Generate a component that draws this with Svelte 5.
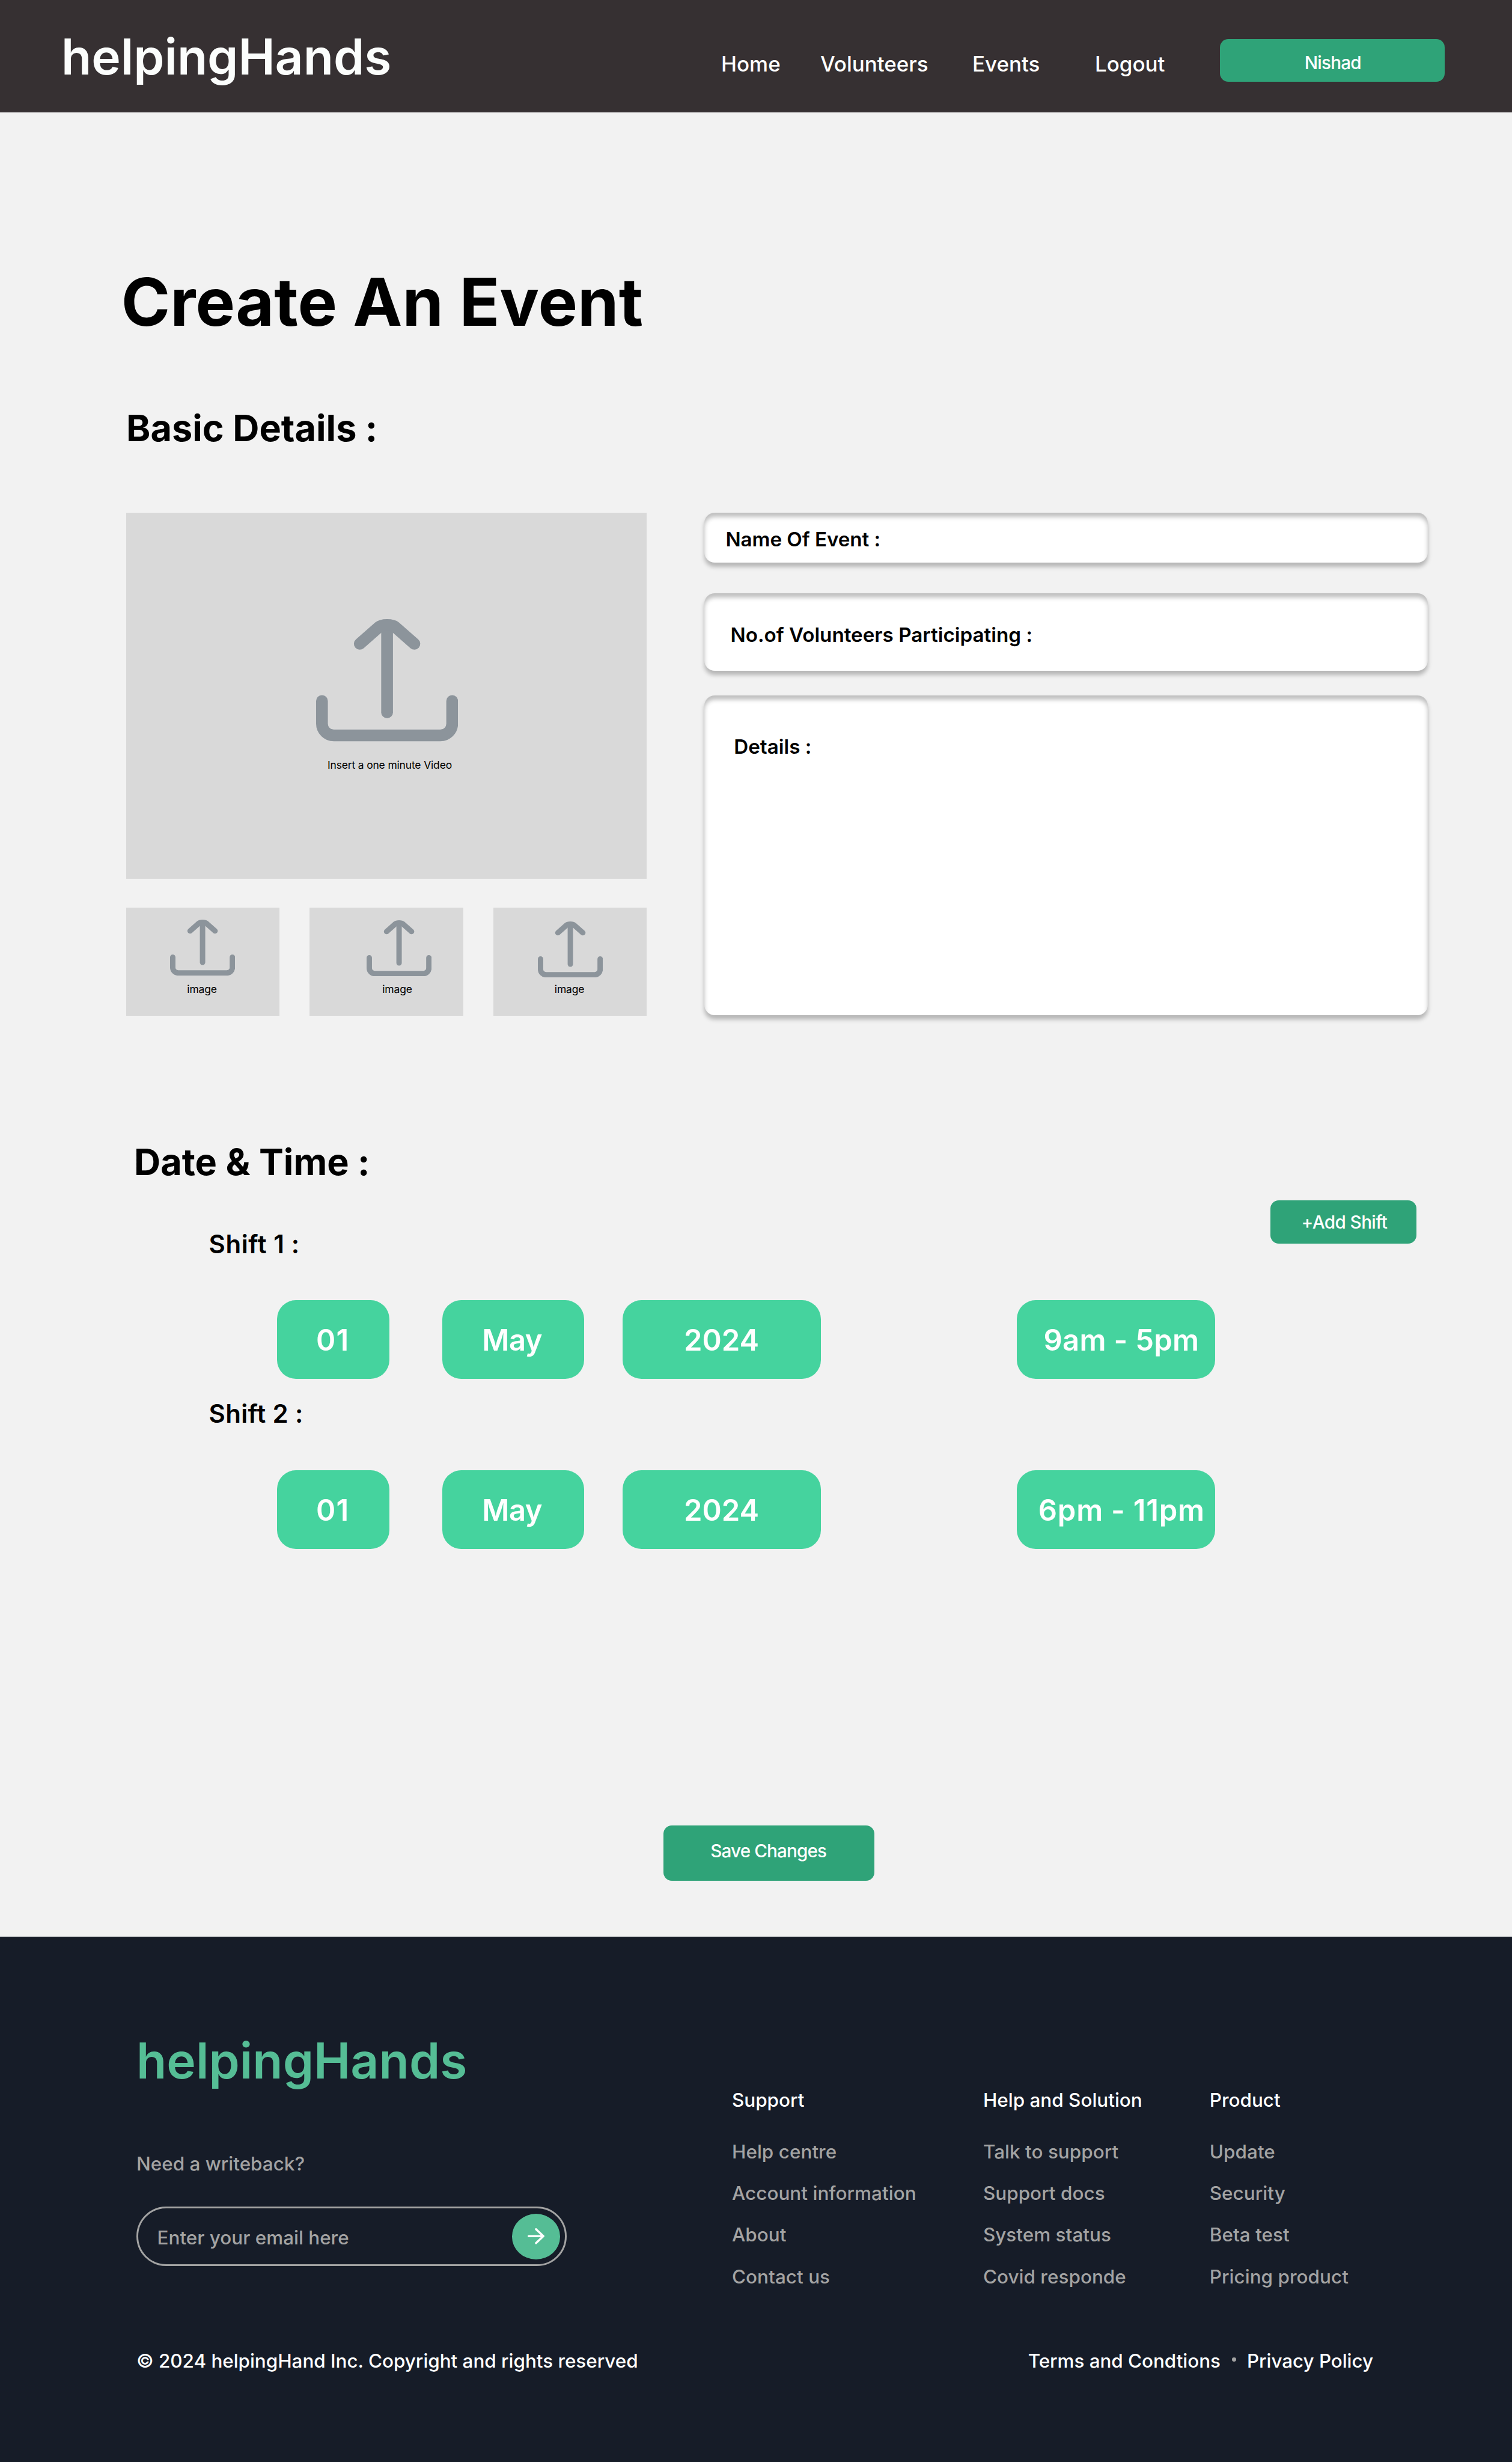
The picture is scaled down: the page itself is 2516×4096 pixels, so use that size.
<script>
  const navLinks = ['Home', 'Volunteers', 'Events', 'Logout'];

  const fields = [
    { id: 'field-name', label: 'Name Of Event :' },
    { id: 'field-count', label: 'No.of Volunteers Participating :' },
    { id: 'field-details', label: 'Details :' }
  ];

  const shifts = [
    { label: 'Shift 1 :', day: '01', month: 'May', year: '2024', time: '9am - 5pm' },
    { label: 'Shift 2 :', day: '01', month: 'May', year: '2024', time: '6pm - 11pm' }
  ];

  const columns = [
    { title: 'Support', links: ['Help centre', 'Account information', 'About', 'Contact us'] },
    { title: 'Help and Solution', links: ['Talk to support', 'Support docs', 'System status', 'Covid responde'] },
    { title: 'Product', links: ['Update', 'Security', 'Beta test', 'Pricing product'] }
  ];
</script>

{#snippet uploadIcon()}
  <svg class="upload" viewBox="0 0 135.2 116.4" aria-hidden="true">
    <path d="M5.6 78V99.6A11.3 11.2 0 0 0 16.9 110.8H118.3A11.3 11.2 0 0 0 129.6 99.6V78" />
    <path d="M67.6 8V88.8" />
    <path d="M41.6 23.5L60 7.4C62.8 5 72.4 5 75.2 7.4L93.6 23.5" />
  </svg>
{/snippet}

<div class="page">
  <header>
    <div class="brand">helpingHands</div>
    <nav>
      {#each navLinks as link}<a href="#top">{link}</a>{/each}
    </nav>
    <button class="btn user">Nishad</button>
  </header>

  <main>
    <h1>Create An Event</h1>
    <h2 class="basic">Basic Details :</h2>

    <section class="details">
      <div class="media">
        <div class="video">
          {@render uploadIcon()}
          <p>Insert a one minute Video</p>
        </div>
        <div class="thumbs">
          {#each [1, 2, 3] as n (n)}
            <div class="thumb">
              {@render uploadIcon()}
              <p>image</p>
            </div>
          {/each}
        </div>
      </div>
      <div class="fields">
        {#each fields as field (field.id)}
          <div class="field {field.id}">{field.label}</div>
        {/each}
      </div>
    </section>

    <h2 class="date">Date &amp; Time :</h2>

    <section class="schedule">
      <div class="shifts">
        {#each shifts as shift}
          <div class="shift">
            <h3>{shift.label}</h3>
            <div class="chips">
              <span class="chip day">{shift.day}</span>
              <span class="chip month">{shift.month}</span>
              <span class="chip year">{shift.year}</span>
              <span class="chip time">{shift.time}</span>
            </div>
          </div>
        {/each}
      </div>
      <button class="btn add">+Add Shift</button>
    </section>

    <button class="btn save">Save Changes</button>
  </main>

  <footer>
    <div class="top">
      <div class="contact">
        <div class="brand green">helpingHands</div>
        <p class="writeback">Need a writeback?</p>
        <div class="email">
          <span>Enter your email here</span>
          <button class="send" aria-label="Send">
            <svg viewBox="0 0 16 15.2" aria-hidden="true">
              <path d="M1 7.6H15M8 1L15 7.6L8 14.2" />
            </svg>
          </button>
        </div>
      </div>
      <div class="columns">
        {#each columns as column}
          <div class="column">
            <h4>{column.title}</h4>
            <ul>
              {#each column.links as link}<li>{link}</li>{/each}
            </ul>
          </div>
        {/each}
      </div>
    </div>
    <div class="bottom">
      <p>© 2024 helpingHand Inc. Copyright and rights reserved</p>
      <div class="legal">
        <span>Terms and Condtions</span>
        <i class="dot"></i>
        <span>Privacy Policy</span>
      </div>
    </div>
  </footer>
</div>

<style>
  /* 1rem is ten units of a 1440-unit-wide layout */
  :global(html) {
    font-size: calc(100vw / 144);
  }
  :global(body) {
    margin: 0;
    background: #f2f2f2;
  }
  * {
    box-sizing: border-box;
  }
  h1, h2, h3, h4, p, ul {
    margin: 0;
    padding: 0;
  }
  ul {
    list-style: none;
  }

  .page {
    width: 144rem;
    height: 234.45rem;
    overflow: hidden;
    background: #f2f2f2;
    color: #000;
    font-family: 'Inter', sans-serif;
    line-height: 1.2;
    white-space: nowrap;
  }

  .btn {
    display: block;
    border: 0;
    border-radius: 0.8rem;
    background: #2fa378;
    color: #fff;
    font: 500 1.7rem/1.2 'Inter', sans-serif;
    text-align: left;
    white-space: nowrap;
  }

  /* Header */
  header {
    display: flex;
    align-items: flex-start;
    height: 10.7rem;
    padding-left: 5.84rem;
    background: #363032;
    color: #fbfdfc;
  }
  .brand {
    font-size: 4.7rem;
    font-weight: 600;
    letter-spacing: -0.002rem;
  }
  header .brand {
    width: 62.84rem;
    margin-top: 2.58rem;
  }
  nav {
    display: grid;
    grid-template-columns: 9.44rem 14.48rem 11.68rem 11.9rem;
    margin-top: 4.94rem;
    font-size: 2rem;
    font-weight: 500;
  }
  nav a {
    color: #fff;
    text-decoration: none;
  }
  .user {
    width: 21.4rem;
    height: 4.1rem;
    margin-top: 3.7rem;
    padding: 0.54rem 0 0 8.06rem;
    letter-spacing: -0.047rem;
  }

  /* Main */
  main {
    height: 173.7rem;
    padding-top: 14.27rem;
  }
  h1 {
    margin-left: 11.54rem;
    font-size: 6.3rem;
    font-weight: 700;
    letter-spacing: 0.006rem;
  }
  h2 {
    font-size: 3.5rem;
    font-weight: 700;
  }
  .basic {
    margin: 6.15rem 0 5.92rem 12.02rem;
  }
  .date {
    margin: 11.88rem 0 1.52rem 12.77rem;
  }

  .details {
    display: flex;
    gap: 5.5rem;
    margin-left: 12rem;
  }
  .media {
    width: 49.6rem;
  }
  .upload {
    display: block;
    fill: none;
    stroke: #8c949b;
    stroke-width: 11.2;
    stroke-linecap: round;
  }
  .video,
  .thumb {
    background: #d9d9d9;
    font-size: 1rem;
    letter-spacing: -0.009rem;
  }
  .video {
    height: 34.9rem;
    padding: 10.17rem 0 0 18.09rem;
  }
  .video .upload {
    width: 13.52rem;
    height: 11.64rem;
  }
  .video p {
    margin: 1.69rem 0 0 1.1rem;
  }
  .thumbs {
    display: flex;
    justify-content: space-between;
    margin-top: 2.7rem;
  }
  .thumb {
    width: 14.6rem;
    height: 10.3rem;
    padding: 1.15rem 0 0 4.21rem;
  }
  .thumb .upload {
    width: 6.19rem;
    height: 5.33rem;
  }
  .thumb p {
    margin: 0.76rem 0 0 1.61rem;
  }
  .thumb:nth-child(2) {
    padding: 1.25rem 0 0 5.4rem;
  }
  .thumb:nth-child(2) p {
    margin: 0.66rem 0 0 1.52rem;
  }
  .thumb:nth-child(3) {
    padding-top: 1.34rem;
  }
  .thumb:nth-child(3) p {
    margin-top: 0.57rem;
  }

  .fields {
    width: 68.9rem;
  }
  .field {
    border-radius: 1rem;
    background: #fff;
    box-shadow:
      0 0.4rem 0.4rem rgba(0, 0, 0, 0.25),
      inset 0 0.4rem 0.4rem rgba(0, 0, 0, 0.25);
    font-size: 1.9rem;
    font-weight: 600;
  }
  .field-name {
    height: 4.8rem;
    padding: 1.44rem 0 0 2.01rem;
    letter-spacing: -0.003rem;
  }
  .field-count {
    height: 7.4rem;
    margin-top: 2.9rem;
    padding: 2.85rem 0 0 2.47rem;
  }
  .field-details {
    height: 30.5rem;
    margin-top: 2.3rem;
    padding: 3.83rem 0 0 2.8rem;
  }

  /* Schedule */
  .schedule {
    display: flex;
    align-items: flex-start;
    height: 33.2rem;
    margin-left: 19.89rem;
  }
  .shifts {
    width: 101.12rem;
    padding-top: 2.72rem;
  }
  .shift + .shift {
    margin-top: 1.88rem;
  }
  h3 {
    font-size: 2.4rem;
    font-weight: 600;
    letter-spacing: 0.02rem;
  }
  .shift:first-child h3 {
    letter-spacing: 0.036rem;
  }
  .chips {
    display: grid;
    grid-template-columns: 15.71rem 17.19rem 37.51rem 18.9rem;
    margin: 3.92rem 0 0 6.52rem;
  }
  .chip {
    height: 7.5rem;
    padding-top: 2.18rem;
    border-radius: 1.8rem;
    background: #45d39e;
    color: #fff;
    font-size: 2.8rem;
    font-weight: 600;
  }
  .day {
    width: 10.7rem;
    padding-left: 3.69rem;
    letter-spacing: 0.08rem;
  }
  .month {
    width: 13.5rem;
    padding-left: 3.8rem;
    letter-spacing: -0.03rem;
  }
  .year {
    width: 18.9rem;
    padding-left: 5.82rem;
  }
  .time {
    width: 18.9rem;
    padding-left: 2.57rem;
    letter-spacing: 0.018rem;
  }
  .shift:last-child .time {
    padding-left: 2.07rem;
    letter-spacing: 0.045rem;
  }
  .add {
    width: 13.9rem;
    height: 4.1rem;
    padding: 0.14rem 0 0 2.93rem;
    letter-spacing: -0.036rem;
  }
  .save {
    width: 20.1rem;
    height: 5.3rem;
    margin: 26.3rem 0 0 63.2rem;
    padding: 0 0 0.4rem 4.47rem;
    letter-spacing: -0.052rem;
  }

  /* Footer */
  footer {
    height: 50.05rem;
    padding: 9.01rem 0 0 12.99rem;
    background: #161c28;
    color: #fff;
    font-size: 1.8rem;
    font-weight: 500;
  }
  .top {
    display: flex;
    height: 30.36rem;
  }
  .contact {
    width: 56.72rem;
  }
  .green {
    color: #55bd95;
    letter-spacing: 0.004rem;
  }
  .writeback {
    margin-top: 5.95rem;
    color: #a3a3a3;
  }
  .email {
    display: flex;
    justify-content: space-between;
    align-items: center;
    width: 41rem;
    height: 5.67rem;
    margin: 2.95rem 0 0 0.01rem;
    padding: 0 0.47rem 0 1.8rem;
    border: 0.2rem solid #a3a3a3;
    border-radius: 2.83rem;
    color: #a3a3a3;
  }
  .email span {
    padding-top: 0.41rem;
  }
  .send {
    display: grid;
    place-items: center;
    width: 4.6rem;
    height: 4.35rem;
    padding: 0;
    border: 0;
    border-radius: 50%;
    background: #55bd95;
  }
  .send svg {
    width: 1.6rem;
    height: 1.52rem;
    fill: none;
    stroke: #fff;
    stroke-width: 2;
    stroke-linecap: round;
    stroke-linejoin: round;
  }
  .columns {
    display: grid;
    grid-template-columns: 23.92rem 21.57rem auto;
    padding-top: 5.54rem;
  }
  h4 {
    font-size: 1.8rem;
    font-weight: 500;
  }
  ul {
    display: grid;
    gap: 1.8rem;
    margin-top: 2.76rem;
    color: #a3a3a3;
    letter-spacing: 0.002rem;
  }
  .bottom {
    display: flex;
  }
  .bottom p {
    width: 84.92rem;
    letter-spacing: -0.002rem;
  }
  .legal {
    display: flex;
    align-items: flex-start;
    letter-spacing: -0.003rem;
  }
  .dot {
    width: 0.4rem;
    height: 0.4rem;
    margin: 0.7rem 1.02rem 0 1.1rem;
    border-radius: 50%;
    background: #a3a3a3;
  }
</style>
